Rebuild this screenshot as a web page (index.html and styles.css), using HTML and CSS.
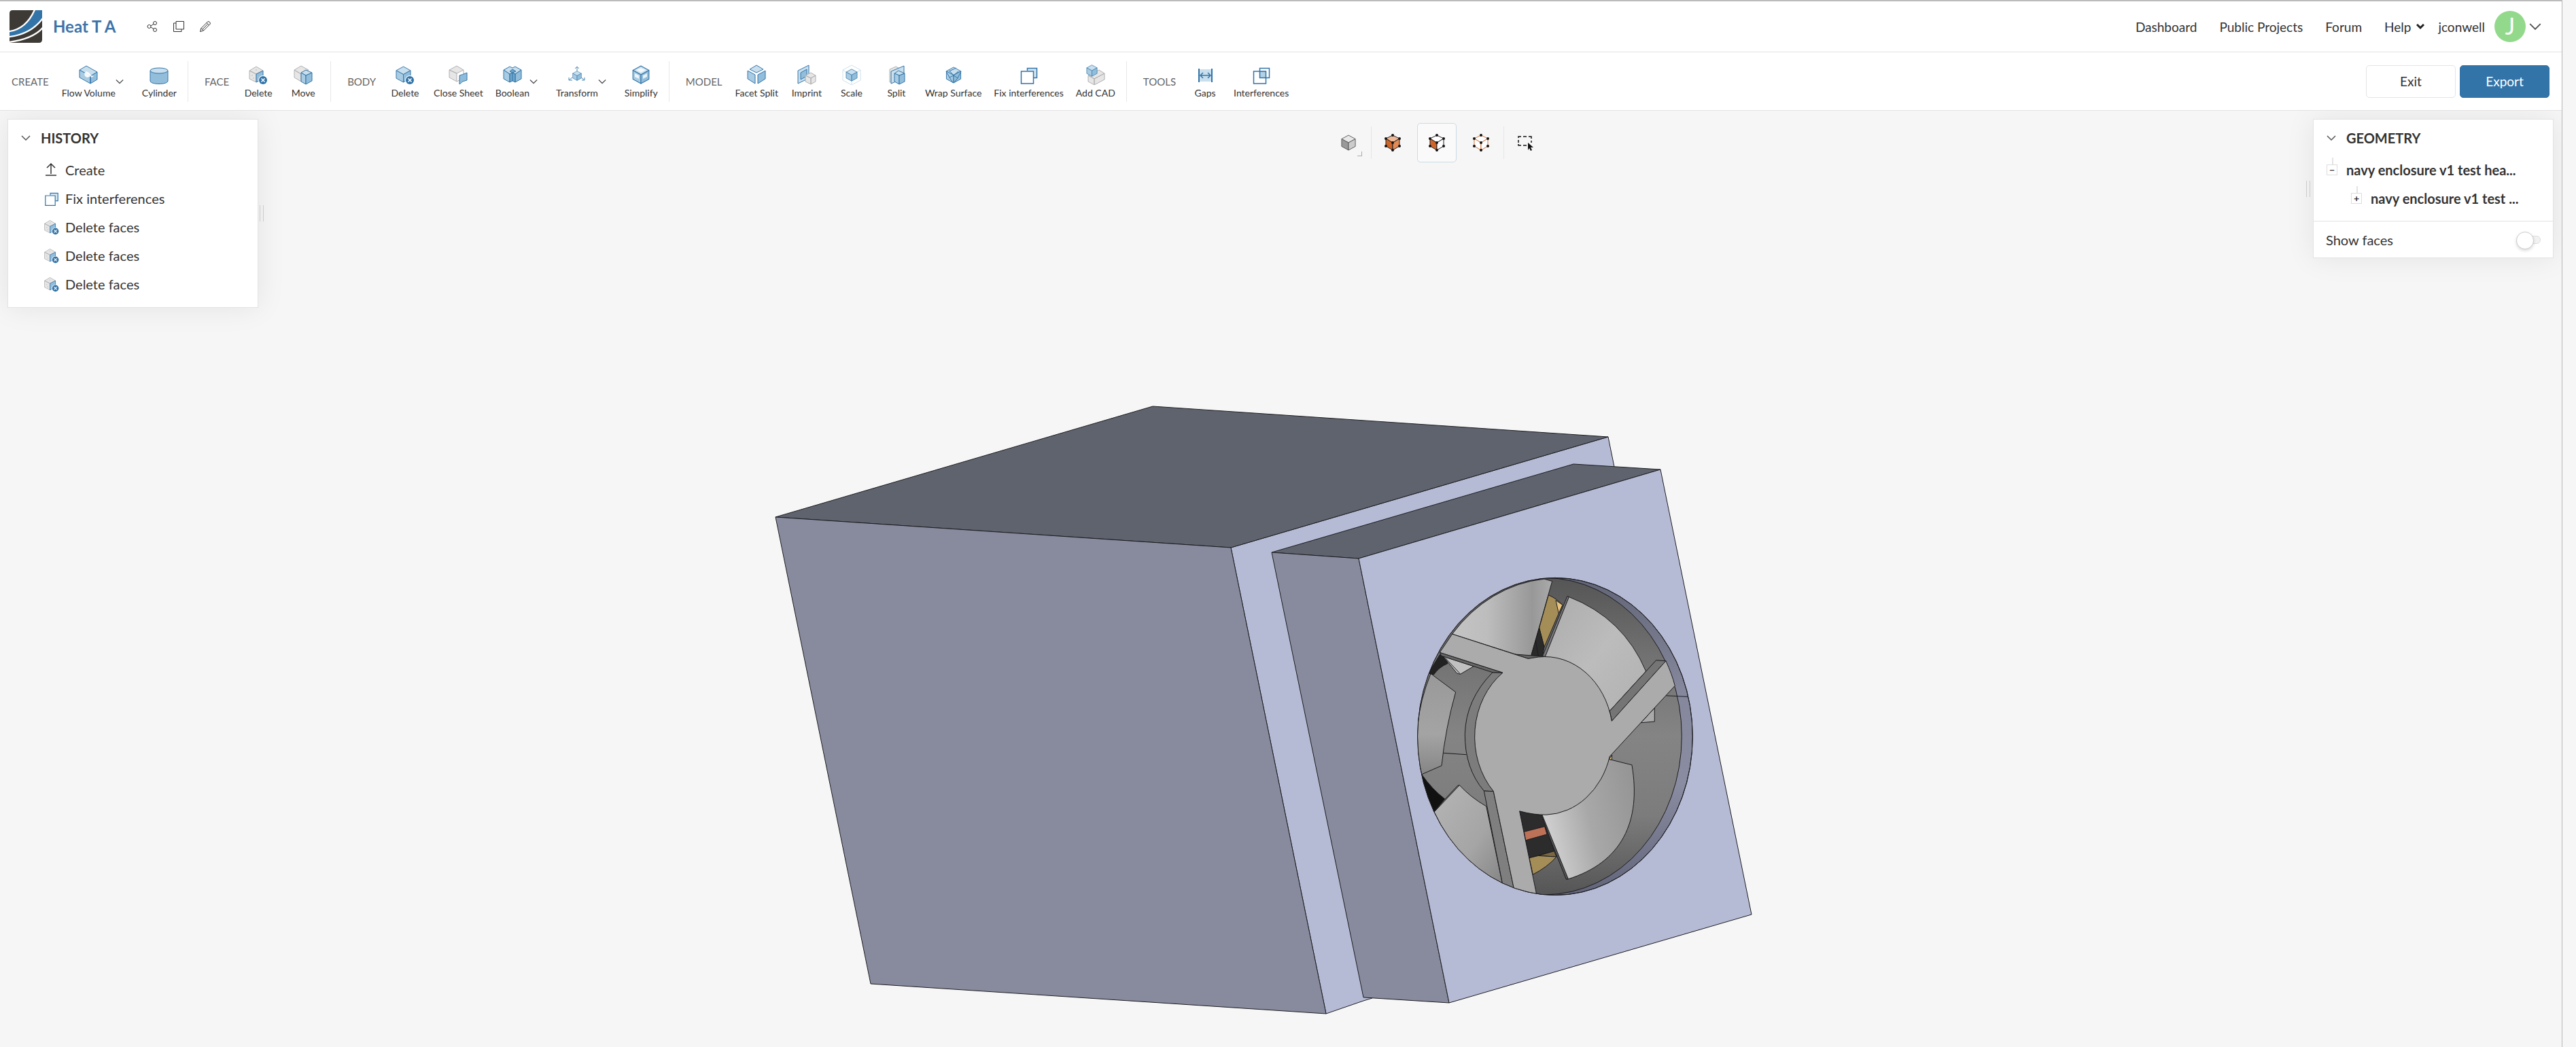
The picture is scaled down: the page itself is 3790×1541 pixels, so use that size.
FILE: index.html
```
<!DOCTYPE html>
<html lang="en">
<head>
    <meta charset="UTF-8">
    <meta name="viewport" content="width=device-width, initial-scale=1.0">
    <title>Heat T A</title>
    <link rel="stylesheet" href="styles.css">
</head>
<body>
    <!-- shared icons -->
    <svg class="sprite" aria-hidden="true">
        <symbol id="chevron" viewBox="0 0 14 14"><path class="line thick" d="M1 4l6 6 6-6"/></symbol>
        <symbol id="badge" viewBox="0 0 14 14"><circle cx="7" cy="7" r="7" fill="#fff"/><circle cx="7" cy="7" r="6" fill="#3274a8"/><path d="M4.5 4.5l5 5m0-5l-5 5" stroke="#fff" stroke-width="1.5"/></symbol>
        <symbol id="cube" viewBox="0 0 24 26">
            <path class="top" d="M12 1l11 6-11 6L1 7z"/>
            <path class="left" d="M1 7l11 6v12L1 19z"/>
            <path class="right" d="M23 7l-11 6v12l11-6z"/>
        </symbol>
        <symbol id="deleteFace" viewBox="0 0 28 30">
            <path class="grey" d="M11 3l10 6-10 5L1 9zM1 9l10 5v12L1 21z"/>
            <path class="right" d="M21 9l-10 5v12l10-5z"/>
            <path d="M11 7v2M5 15v2M7 19v2" stroke="#bbb"/>
            <use href="#badge" x="14" y="16" width="14" height="14"/>
        </symbol>
        <symbol id="fix" viewBox="0 0 28 30">
            <path d="M11.500 9V5.500h14v14H21" fill="#d5e6f1" stroke="#3274a8" stroke-width="1.500"/>
            <path d="M2.500 10h18v18h-18z" fill="#fff" stroke="#3274a8" stroke-width="1.500"/>
        </symbol>
        <symbol id="vertexCube" viewBox="0 0 24 26">
            <path class="top" d="M12 2l10 5-10 6L2 7z"/>
            <path class="left" d="M2 7l10 6v11L2 18z"/>
            <path class="right" d="M22 7l-10 6v11l10-6z"/>
            <g fill="#111"><circle cx="12" cy="2" r="2"/><circle cx="22" cy="7" r="2"/><circle cx="2" cy="7" r="2"/><circle cx="12" cy="13" r="2"/><circle cx="2" cy="18" r="2"/><circle cx="22" cy="18" r="2"/><circle cx="12" cy="24" r="2"/></g>
        </symbol>
    </svg>

    <div class="app">
        <header class="header">
            <a class="logo" href="#" aria-label="Home">
                <svg viewBox="0 0 144 144" width="48" height="48">
                    <path fill="#3d3935" d="M0 14Q0 0 14 0H144V130Q144 144 130 144H0z"/>
                    <path fill="#3274a8" d="M114 0H144V38Q96 106 0 118V94Q74 84 114 0z"/>
                    <path fill="none" stroke="#fff" stroke-width="7" d="M112 -4Q74 84 -4 94M148 34Q96 106 -4 118M148 76Q104 128 -4 141"/>
                </svg>
            </a>
            <h1 class="project-name">Heat T A</h1>
            <div class="project-actions">
                <button aria-label="Share"><svg viewBox="0 0 16 16" width="16" height="16"><g class="line"><circle cx="3.500" cy="8" r="2.500"/><circle cx="12" cy="3" r="2.500"/><circle cx="12" cy="13" r="2.500"/><path d="M6 7l4-2.500M6 9l4 2.500"/></g></svg></button>
                <button aria-label="Copy"><svg viewBox="0 0 16 16" width="16" height="16"><path class="line" d="M4 .5h11.500V12H4zM4 3H.5v12.500H12V12"/></svg></button>
                <button aria-label="Rename"><svg viewBox="0 0 16 16" width="16" height="16"><path class="line" d="M.5 15.500l1.500-5L11.500 1Q13 0 14.500 1.500T15 4.500L5.500 14zM2 10.500L5.500 14M10 2.500L13.500 6M4 12l7.500-7.500"/></svg></button>
            </div>
            <nav class="nav">
                <a href="#">Dashboard</a>
                <a href="#">Public Projects</a>
                <a href="#">Forum</a>
                <button class="help">Help <svg viewBox="0 0 12 10" width="12" height="10"><path d="M1 2l5 5 5-5" fill="none" stroke="#222" stroke-width="3"/></svg></button>
                <button class="user">jconwell
                    <span class="avatar">J</span>
                    <svg width="18" height="18"><use href="#chevron"/></svg>
                </button>
            </nav>
        </header>

        <div class="toolbar">
            <section class="group">
                <h2>CREATE</h2>
                <button class="tool">
                    <svg viewBox="0 0 28 30"><path class="top" d="M1 8l10-6 16 9-10 6z"/><path class="left" d="M1 8l16 9v11L1 19z"/><path class="right" d="M27 11l-10 6v11l10-6z"/><path d="M8 13l3-3 4 2 3 4 4 1-3 2-3-1-4 1-3-2z" fill="#fff" opacity=".9"/><path d="M17 17v11" stroke="#3274a8"/></svg>
                    Flow Volume
                </button>
                <button class="caret" aria-label="More flow volume tools"><svg width="12" height="12"><use href="#chevron"/></svg></button>
                <button class="tool">
                    <svg viewBox="0 0 28 30"><path class="right" d="M1 9v15c0 6 26 6 26 0V9z"/><ellipse class="top" cx="14" cy="9" rx="13" ry="4"/></svg>
                    Cylinder
                </button>
            </section>
            <section class="group">
                <h2>FACE</h2>
                <button class="tool"><svg><use href="#deleteFace"/></svg>Delete</button>
                <button class="tool">
                    <svg viewBox="0 0 28 30"><path class="grey" d="M11 2l11 6-11 6L1 8zM1 8l10 6v11L1 19z"/><path class="top" d="M18 8l9 4-9 4-7-4z"/><path class="left" d="M11 12l7 4v13l-7-4z"/><path class="right" d="M27 12l-9 4v13l9-5z"/></svg>
                    Move
                </button>
            </section>
            <section class="group">
                <h2>BODY</h2>
                <button class="tool">
                    <svg viewBox="0 0 28 30"><use href="#cube" x="0" y="2" width="23" height="25"/><use href="#badge" x="14" y="16" width="14" height="14"/></svg>
                    Delete
                </button>
                <button class="tool">
                    <svg viewBox="0 0 28 30"><path class="grey" d="M12 2l10 6-10 5L1 8zM1 8l11 5v12L1 19z"/><path d="M22 8v8M12 25l4-2" stroke="#b0b0b0"/><path d="M16 16q4-1 11-4v11q-7 1-11 6z" fill="#8fbcda" stroke="#3274a8"/></svg>
                    Close Sheet
                </button>
                <button class="tool">
                    <svg viewBox="0 0 28 30"><path class="top" d="M10 3l4 2 4-2 9 5-9 6-4-2-4 2-9-6z"/><path class="left" d="M1 8l9 6v12l-9-5z"/><path class="right" d="M27 8l-9 6v12l9-5z"/><path d="M10 14l4-2 4 2v12l-4-2-4 2zM14 12v12M10 10l4-3 5 3-5 2z" fill="#6fa6cb" stroke="#3274a8"/></svg>
                    Boolean
                </button>
                <button class="caret" aria-label="More boolean tools"><svg width="12" height="12"><use href="#chevron"/></svg></button>
                <button class="tool">
                    <svg viewBox="0 0 28 30"><path d="M14 10V4m-3 2l3-3 3 3M7 19l-5 4m0-4v4h5M20 19l5 4m0-4v4h-4" fill="none" stroke="#4d8ab6"/><use href="#cube" x="7" y="9" width="14" height="15"/></svg>
                    Transform
                </button>
                <button class="caret" aria-label="More transform tools"><svg width="12" height="12"><use href="#chevron"/></svg></button>
                <button class="tool">
                    <svg viewBox="0 0 28 30"><use href="#cube" x="1" y="1" width="26" height="28"/><path d="M14 5l7 3-7 4-7-4zM5 13l6 3v5l-6-3zM23 13l-6 3v5l6-3z" fill="#fff" opacity=".8"/></svg>
                    Simplify
                </button>
            </section>
            <section class="group">
                <h2>MODEL</h2>
                <button class="tool">
                    <svg viewBox="0 0 28 30"><path class="top" d="M14 1l10 6-10 5L4 7z"/><path class="left" d="M1 9l11 6v13L1 21z"/><path class="right" d="M27 9l-11 6v13l11-7z"/></svg>
                    Facet Split
                </button>
                <button class="tool">
                    <svg viewBox="0 0 28 30"><path class="top" d="M1 9l16-8v19L1 28z"/><path class="right" d="M5 12l9-5v10l-9 5z"/><path class="grey" d="M20 12l7 4-7 4-8-4zM12 16l8 4v9l-8-4zM27 16v9l-7 4v-9z"/></svg>
                    Imprint
                </button>
                <button class="tool">
                    <svg viewBox="0 0 28 30"><path d="M14 1l13 7v15l-13 7-13-7V8zM1 8l5 3M27 8l-5 3M14 25v5" fill="none" stroke="#cfe1eb"/><use href="#cube" x="5" y="6" width="18" height="19"/></svg>
                    Scale
                </button>
                <button class="tool">
                    <svg viewBox="0 0 28 30"><path class="grey" d="M4 7l9-4 6 3v17L4 26z"/><path class="top" d="M6 10l19-8v18L6 28z"/><path class="top" d="M17 9l9 4-8 3-7-3z"/><path class="left" d="M11 13l7 3v13l-7-4z"/><path class="right" d="M26 13v12l-8 4V16z"/></svg>
                    Split
                </button>
                <button class="tool">
                    <svg viewBox="0 0 28 30"><use href="#cube" x="2" y="3" width="24" height="25"/><path d="M7 10l11-5M14 16l7-6M14 16L8 9M3 10l5 9M14 16l-6 3M8 19l5 8M14 16l6 4M25 10l-5 10M20 20l-6 7" fill="none" stroke="#3274a8"/></svg>
                    Wrap Surface
                </button>
                <button class="tool"><svg><use href="#fix"/></svg>Fix interferences</button>
                <button class="tool">
                    <svg viewBox="0 0 28 30"><path class="grey" d="M19 8l8 5-15 8-9-5zM3 16l9 5v9l-9-5zM27 13v9l-15 8v-9z"/><use href="#cube" x="0" y="0" width="17" height="18"/></svg>
                    Add CAD
                </button>
            </section>
            <section class="group">
                <h2>TOOLS</h2>
                <button class="tool">
                    <svg viewBox="0 0 28 30"><path d="M4 7h20v18H4z" fill="#c9dfed"/><path d="M5 6v20M24 6v20" stroke="#3274a8" stroke-width="2"/><path d="M8 16h13M11 12l-4 4 4 4M18 12l4 4-4 4" fill="none" stroke="#3274a8" stroke-width="1.500"/></svg>
                    Gaps
                </button>
                <button class="tool">
                    <svg viewBox="0 0 28 30"><path d="M12 9h9v10h-9z" fill="#b4d2e5"/><path d="M11.500 5.500h14v14h-14zM2.500 10h18v18h-18z" fill="none" stroke="#3274a8" stroke-width="1.500"/></svg>
                    Interferences
                </button>
            </section>
            <div class="toolbar-end">
                <button class="btn">Exit</button>
                <button class="btn btn-primary">Export</button>
            </div>
        </div>

        <main class="viewer">
            <!-- 3D model -->
            <svg class="scene" viewBox="0 163 3769 1378" preserveAspectRatio="xMidYMid slice" role="img" aria-label="Enclosure with fan">
                <defs>
                    <linearGradient id="duct" x1="0" y1="0" x2="0" y2="1"><stop offset="0" stop-color="#555"/><stop offset=".25" stop-color="#727272"/><stop offset=".5" stop-color="#848484"/><stop offset=".75" stop-color="#7c7c7c"/><stop offset="1" stop-color="#555"/></linearGradient>
                    <linearGradient id="rim" x1="0" y1="0" x2="0" y2="1"><stop offset="0" stop-color="#626577"/><stop offset=".35" stop-color="#85889c"/><stop offset=".65" stop-color="#8a8da2"/><stop offset="1" stop-color="#62657a"/></linearGradient>
                    <linearGradient id="bladeA"><stop offset="0" stop-color="#c4c4c4"/><stop offset=".35" stop-color="#bdbdbd"/><stop offset=".8" stop-color="#989898"/><stop offset="1" stop-color="#aaa"/></linearGradient>
                    <linearGradient id="bladeB" x1="0" y1="0" x2="1" y2="1"><stop offset="0" stop-color="#ababab"/><stop offset=".5" stop-color="#bcbcbc"/><stop offset="1" stop-color="#b0b0b0"/></linearGradient>
                    <linearGradient id="bladeC" x1="0" y1=".6" x2="1" y2=".3"><stop offset=".05" stop-color="#d0d0d0"/><stop offset=".5" stop-color="#a8a8a8"/><stop offset="1" stop-color="#969696"/></linearGradient>
                    <linearGradient id="bladeD" x1="0" y1="0" x2="1" y2="1"><stop offset="0" stop-color="#b5b5b5"/><stop offset=".6" stop-color="#a5a5a5"/><stop offset="1" stop-color="#858585"/></linearGradient>
                    <linearGradient id="bladeE" x1="0" y1="0" x2="0" y2="1"><stop offset="0" stop-color="#999"/><stop offset=".6" stop-color="#a4a4a4"/><stop offset="1" stop-color="#858585"/></linearGradient>
                    <clipPath id="hole"><ellipse cx="684" cy="781" rx="607" ry="691"/></clipPath>
                </defs>
                <g class="edges">
                    <path fill="#b6bbd5" d="M2366 643L1811 806 1951 1492l55-19 13-4L2375 687z"/>
                    <path fill="#5f636e" d="M1141 761l555-163 670 45-555 163z"/>
                    <path fill="#888b9e" d="M1141 761l670 45 140 686-670-44z"/>
                    <path fill="#5f636e" d="M1871 813l444-130 128 8-444 131z"/>
                    <path fill="#888b9e" d="M1871 813l128 9 133 654-126-8z"/>
                    <path fill="#b6bbd5" d="M1999 822l444-131 134 655-445 130z"/>
                    <g transform="translate(2060 820) scale(.3333 .338)">
                        <ellipse fill="url(#rim)" cx="684" cy="781" rx="607" ry="691"/>
                        <g clip-path="url(#hole)">
                            <ellipse fill="url(#duct)" cx="638" cy="780" rx="605" ry="690"/>
                            <path fill="none" d="M1173 603l100 5M190 853l102 7"/>
                            <!-- blades -->
                            <path fill="url(#bladeA)" d="M230 335A607 691 0 0 1 636 95L671 105 578 430 515 425z"/>
                            <path fill="#a48d57" d="M655 165Q690 180 717 208L700 245 636 392 614 308z"/>
                            <path fill="#e6c27c" d="M687 188L717 208 700 245z"/>
                            <path fill="#2a2a2a" d="M614 308L636 392 628 432 578 430z"/>
                            <path fill="none" d="M598 362L610 432"/>
                            <path fill="url(#bladeB)" d="M745 173Q985 265 1085 497L925 670 850 700 636 432z"/>
                            <path fill="#777" d="M738 170L745 173 640 434 628 432z"/>
                            <path fill="#aaa" d="M1123 657V716L1063 721z"/>
                            <path fill="url(#bladeC)" d="M922 880L1023 905C1065 1150 980 1330 738 1403L625 1125 800 1000z"/>
                            <path fill="#555" d="M620 1125L628 1125 742 1401 733 1403z"/>
                            <path fill="#e6c27c" d="M935 862L934 883 922 880z"/>
                            <path fill="url(#bladeE)" d="M135 507L245 588Q200 745 183 908L95 946Q40 740 135 507z"/>
                            <path fill="#111" d="M95 946Q140 1010 197 1053L148 1113 60 1000z"/>
                            <path fill="#222" d="M175 425L195 430 210 463Q170 480 148 512L125 505z"/>
                            <path fill="#c0c0c0" d="M190 432L325 475 265 510 250 505z"/>
                            <path fill="none" d="M200 440L265 508"/>
                            <path fill="url(#bladeD)" d="M150 1110L262 993Q310 1045 380 1085L452 1424Q260 1340 150 1110z"/>
                            <path fill="none" d="M148 1106L254 995 262 993"/>
                            <!-- hub side and struts -->
                            <path fill="#7c7c7c" d="M408 502L453 503Q331 620 331 780 333 910 412 1020L370 1018Q285 920 286 770 290 620 408 502z"/>
                            <path fill="#7f7f7f" d="M370 1018L412 1020 502 1443 452 1424z"/>
                            <path fill="#666" d="M175 415L453 503 408 502 182 430z"/>
                            <path fill="#757575" d="M1130 449L1173 452 934 714 925 670z"/>
                            <path fill="#666" d="M505 423L640 433 565 442z"/>
                            <path fill="#2c2c2c" d="M527 1106L625 1125 680 1280 570 1310z"/>
                            <path fill="#bd7258" d="M547 1196L638 1173 648 1207 554 1233z"/>
                            <path fill="#7a6842" d="M610 1300L680 1280 690 1305z"/>
                            <path fill="#a48d57" d="M570 1310L610 1300 690 1305Q650 1350 586 1382z"/>
                            <path fill="#ababab" d="M230 335L565 442 610 435A301 345 0 0 1 934 714L1173 452Q1200 510 1213 560L925 868A301 345 0 0 1 645 1122Q590 1123 527 1106L602 1468 502 1443 412 1020A301 345 0 0 1 453 503L175 415z"/>
                        </g>
                        <ellipse fill="none" cx="684" cy="781" rx="607" ry="691"/>
                    </g>
                </g>
            </svg>

            <aside class="panel history">
                <button class="panel-title"><svg width="14" height="14"><use href="#chevron"/></svg>HISTORY</button>
                <ul>
                    <li><button><svg viewBox="0 0 24 24"><path d="M11 3v15M5 9l6-6 6 6M3 20h16" fill="none" stroke="#333" stroke-width="1.500"/></svg>Create</button></li>
                    <li><button><svg><use href="#fix"/></svg>Fix interferences</button></li>
                    <li><button><svg><use href="#deleteFace"/></svg>Delete faces</button></li>
                    <li><button><svg><use href="#deleteFace"/></svg>Delete faces</button></li>
                    <li><button><svg><use href="#deleteFace"/></svg>Delete faces</button></li>
                </ul>
                <span class="handle"></span>
            </aside>

            <div class="view-tools">
                <button class="shading" aria-label="Shading"><svg width="22" height="24"><use href="#cube"/></svg></button>
                <button class="pick-body divided" aria-label="Pick bodies"><svg width="24" height="26"><use href="#vertexCube"/></svg></button>
                <button class="pick-face active" aria-label="Pick faces"><svg width="24" height="26"><use href="#vertexCube"/></svg></button>
                <button class="pick-edge" aria-label="Pick edges"><svg width="24" height="26"><use href="#vertexCube"/></svg></button>
                <button class="divided" aria-label="Box select"><svg viewBox="0 0 24 24" width="24" height="24"><path d="M2 5V3h4M9 3h5M17 3h4v3M21 9v3M2 8v4M2 14v2h4M9 16h5" fill="none" stroke="#111" stroke-width="1.500"/><path d="M16 12l8 7h-4l2 4-2 1-2-4-2 3z" fill="#111"/></svg></button>
            </div>

            <aside class="panel geometry">
                <button class="panel-title"><svg width="14" height="14"><use href="#chevron"/></svg>GEOMETRY</button>
                <ul>
                    <li><button class="expander" aria-label="Collapse">&minus;</button><b>navy enclosure v1 test hea...</b></li>
                    <li class="child"><button class="expander" aria-label="Expand">+</button><b>navy enclosure v1 test ...</b></li>
                </ul>
                <label class="switch">Show faces<input type="checkbox"></label>
                <span class="handle"></span>
            </aside>
        </main>
    </div>
</body>
</html>
```
FILE: styles.css
```
* {
    box-sizing: border-box;
}
body {
    margin: 0;
    padding-right: 20px;
    background: #f6f6f6;
    color: #333;
    font-family: Lato, "Open Sans", sans-serif;
    font-size: 20px;
}
button {
    padding: 0;
    border: 0;
    background: none;
    color: inherit;
    font: inherit;
}
h1, h2, ul {
    margin: 0;
    padding: 0;
    list-style: none;
}
.sprite {
    position: absolute;
    width: 0;
    height: 0;
}
.line {
    fill: none;
    stroke: #333;
}
.thick {
    stroke: #555;
    stroke-width: 1.5;
}

.app {
    display: flex;
    flex-direction: column;
    height: 100vh;
    border-top: 2px solid #bbb;
    border-right: 1px solid #b5b5b5;
}

/* header */
.header {
    display: flex;
    align-items: center;
    height: 75px;
    padding: 0 30px 0 14px;
    border-bottom: 1px solid #e2e2e2;
    background: #fff;
}
.logo, .logo svg, .project-actions svg {
    display: block;
}
.project-name {
    margin-left: 16px;
    color: #3d73a8;
    font-size: 24px;
    line-height: 32px;
}
.project-actions {
    display: flex;
    gap: 23px;
    margin-left: 46px;
}
.nav {
    display: flex;
    align-items: center;
    gap: 33px;
    margin-left: auto;
    font-size: 19px;
}
.nav a {
    color: inherit;
    text-decoration: none;
}
.help {
    display: flex;
    align-items: center;
    gap: 8px;
}
.user {
    display: flex;
    align-items: center;
    gap: 5px;
    margin-left: -13px;
}
.avatar {
    width: 46px;
    height: 46px;
    margin-left: 9px;
    border-radius: 50%;
    background: #93d98c;
    color: #fff;
    font-size: 34px;
    line-height: 44px;
}

/* toolbar */
.toolbar {
    display: flex;
    align-items: center;
    flex: none;
    height: 86px;
    padding-right: 18px;
    border-bottom: 1px solid #e2e2e2;
    background: #fff;
}
.group {
    display: flex;
    align-items: center;
    height: 60px;
    padding: 0 7px 0 24px;
    border-left: 1px solid #e8e8e8;
}
.group:first-child {
    padding-left: 16px;
    border-left-color: transparent;
}
.group h2 {
    margin-right: 10px;
    color: #666;
    font-size: 15px;
    font-weight: 400;
}
.tool {
    display: flex;
    flex-direction: column;
    align-items: center;
    gap: 4px;
    min-width: 66px;
    padding: 0 9px;
    font-size: 14px;
    line-height: 16px;
    white-space: nowrap;
}
.tool svg {
    width: 28px;
    height: 30px;
}
.caret {
    margin: 0 18px 0 -9px;
}
.caret svg {
    display: block;
}
.toolbar-end {
    display: flex;
    gap: 6px;
    margin-left: auto;
}
.btn {
    width: 132px;
    height: 48px;
    border: 1px solid #e4e4e4;
    border-radius: 5px;
    font-size: 19px;
}
.btn-primary {
    border-color: #3274a8;
    background: #3274a8;
    color: #fff;
}

/* icon faces */
.top, .left, .right {
    fill: var(--top, #c9dfed);
    stroke: var(--stroke, #3274a8);
    stroke-linejoin: round;
}
.left {
    fill: var(--left, #a9cce3);
}
.right {
    fill: var(--right, #92bedb);
}
.grey {
    fill: #e6e6e6;
    stroke: #b0b0b0;
    stroke-linejoin: round;
}

/* viewer */
.viewer {
    position: relative;
    flex: 1;
    min-height: 0;
    overflow: hidden;
}
.scene {
    display: block;
    width: 100%;
    height: 100%;
}
.edges > *, .edges g > * {
    vector-effect: non-scaling-stroke;
}
.edges {
    stroke: #1c1c20;
    stroke-width: 1;
    stroke-linejoin: round;
}
.panel {
    position: absolute;
    top: 12px;
    border: 1px solid #e3e3e3;
    background: #fff;
    box-shadow: 0 0 40px rgba(0, 0, 0, .08);
}
.history {
    left: 11px;
    width: 369px;
    padding-bottom: 13px;
}
.geometry {
    right: 12px;
    width: 354px;
}
.panel-title {
    display: flex;
    align-items: center;
    gap: 15px;
    height: 53px;
    padding-left: 19px;
    font-weight: 700;
}
.history li button, .geometry li {
    display: flex;
    align-items: center;
    height: 42px;
}
.history li button {
    gap: 8px;
    padding-left: 52px;
}
.history li svg {
    width: 24px;
    height: 24px;
}
.handle {
    position: absolute;
    top: 126px;
    left: 370px;
    width: 6px;
    height: 24px;
    border: solid #ccc;
    border-width: 0 1px;
}
.geometry .handle {
    top: 90px;
    left: -11px;
}
.geometry ul {
    padding: 0 0 12px 19px;
}
.geometry li {
    gap: 13px;
}
.geometry .child {
    padding-left: 36px;
}
.expander {
    position: relative;
    width: 16px;
    height: 16px;
    border: 1px solid #ddd;
    font-size: 14px;
    font-weight: 700;
    line-height: 12px;
}
.expander::before {
    content: "";
    position: absolute;
    bottom: 15px;
    left: 7px;
    height: 10px;
    border-left: 2px solid #e3e3e3;
}
.switch {
    display: flex;
    align-items: center;
    justify-content: space-between;
    height: 54px;
    padding: 0 18px;
    border-top: 1px solid #e3e3e3;
}
.switch input {
    appearance: none;
    position: relative;
    width: 30px;
    height: 12px;
    margin: 0;
    border: 1px solid #ddd;
    border-radius: 6px;
    background: #f2f2f2;
}
.switch input::before {
    content: "";
    position: absolute;
    top: -7px;
    left: -7px;
    width: 24px;
    height: 24px;
    border: 1px solid #ccc;
    border-radius: 50%;
    background: #fff;
    box-shadow: 0 2px 4px rgba(0, 0, 0, .15);
}
.view-tools {
    position: absolute;
    top: 18px;
    left: calc(50% + 70px);
    display: flex;
    gap: 7px;
}
.view-tools button {
    position: relative;
    display: flex;
    align-items: center;
    justify-content: center;
    width: 58px;
    height: 58px;
    border: 1px solid transparent;
    border-radius: 5px;
}
.view-tools .active {
    border-color: #c9dbe7;
    background: #fafafa;
}
.divided::before {
    content: "";
    position: absolute;
    left: -4px;
    height: 48px;
    border-left: 1px solid #e6e6e6;
}
.shading {
    --top: #e8e8e8;
    --left: #999;
    --right: #ccc;
    --stroke: #555;
}
.shading::after {
    content: "";
    position: absolute;
    right: 8px;
    bottom: 8px;
    width: 6px;
    height: 6px;
    border: solid #aaa;
    border-width: 0 1px 1px 0;
}
.pick-body {
    --top: #efb896;
    --left: #cf6529;
    --right: #e28b58;
    --stroke: #222;
}
.pick-face {
    --top: #fff;
    --left: #cf6529;
    --right: #fff;
    --stroke: #222;
}
.pick-edge {
    --top: #fff;
    --left: #fff;
    --right: #fff;
    --stroke: #d5743f;
}
```
